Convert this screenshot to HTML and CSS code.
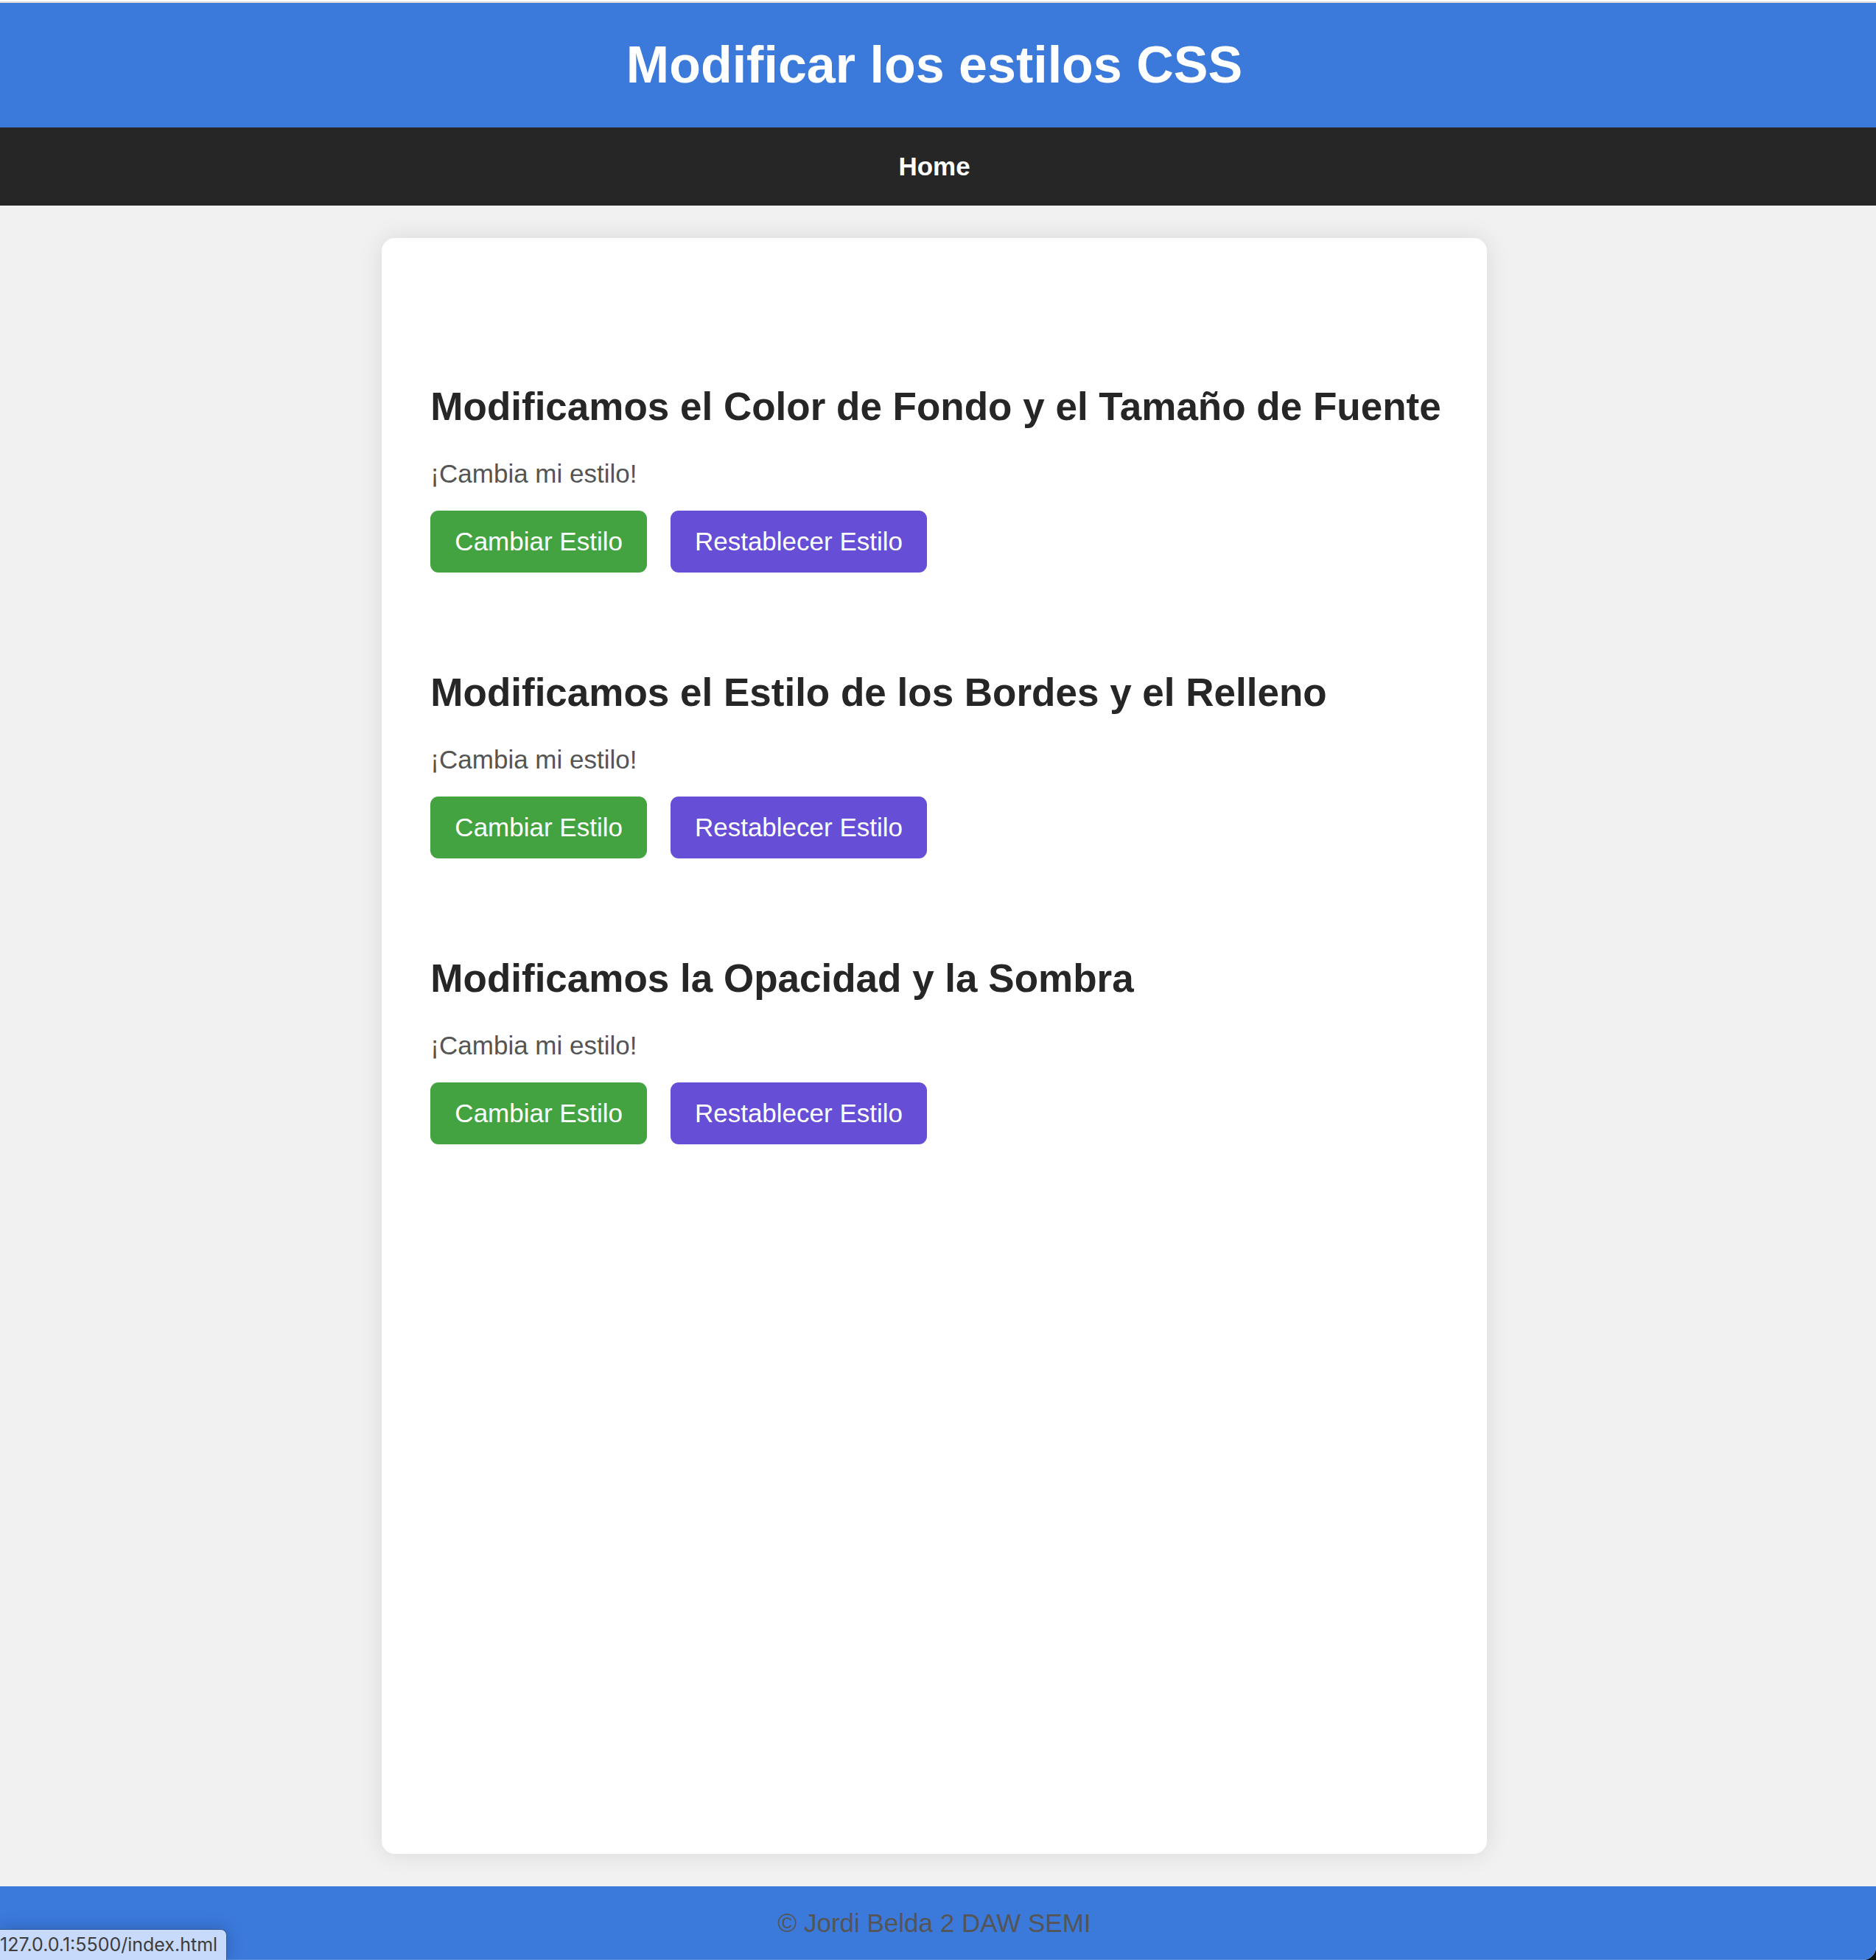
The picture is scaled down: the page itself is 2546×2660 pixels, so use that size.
FILE: index.html
```html
<!DOCTYPE html>
<html lang="es">
<head>
  <meta charset="UTF-8">
  <meta name="viewport" content="width=device-width, initial-scale=1">
  <title>Modificar los estilos CSS</title>
  <link rel="stylesheet" href="styles.css">
</head>
<body>
  <div class="page">
    <header class="header">
      <h1 class="title">Modificar los estilos CSS</h1>
    </header>
    <nav class="nav">
      <a class="nav-link" href="index.html">Home</a>
    </nav>
    <main class="main">
      <div class="card">
        <section class="section">
          <h2 class="heading">Modificamos el Color de Fondo y el Tamaño de Fuente</h2>
          <p class="text">¡Cambia mi estilo!</p>
          <div class="actions">
            <button class="button button-change" type="button">Cambiar Estilo</button>
            <button class="button button-reset" type="button">Restablecer Estilo</button>
          </div>
        </section>
        <section class="section">
          <h2 class="heading">Modificamos el Estilo de los Bordes y el Relleno</h2>
          <p class="text">¡Cambia mi estilo!</p>
          <div class="actions">
            <button class="button button-change" type="button">Cambiar Estilo</button>
            <button class="button button-reset" type="button">Restablecer Estilo</button>
          </div>
        </section>
        <section class="section">
          <h2 class="heading">Modificamos la Opacidad y la Sombra</h2>
          <p class="text">¡Cambia mi estilo!</p>
          <div class="actions">
            <button class="button button-change" type="button">Cambiar Estilo</button>
            <button class="button button-reset" type="button">Restablecer Estilo</button>
          </div>
        </section>
      </div>
    </main>
    <footer class="footer">
      <p class="text">© Jordi Belda 2 DAW SEMI</p>
    </footer>
    <div class="status">127.0.0.1:5500/index.html</div>
  </div>
</body>
</html>
```
FILE: styles.css
```css
* {
  box-sizing: border-box;
}

body {
  margin: 0;
  background: #0a1710;
  font-family: "Liberation Sans", Arial, sans-serif;
  font-size: 35px;
  line-height: 40px;
  color: #555;
}

h1,
h2,
p {
  margin: 0;
}

/* Window area: hairline under the toolbar, rounded lower corner */
.page {
  position: relative;
  display: flex;
  flex-direction: column;
  min-height: 100vh;
  padding-top: 2px;
  overflow: hidden;
  background: #f1f1f1 linear-gradient(#fff, #fff) top / 100% 2px no-repeat;
  border-bottom-right-radius: 18px;
}

.header,
.nav,
.main,
.footer {
  display: flex;
  justify-content: center;
  padding-right: 10px;
}

.header {
  padding-top: 44px;
  padding-bottom: 45px;
  border-top: 2px solid #d9d9d9;
  background: #3b79db;
}

.title {
  font-size: 70px;
  line-height: 80px;
  color: #fff;
}

.nav {
  padding-top: 33px;
  padding-bottom: 33px;
  background: #262626;
}

.nav-link {
  font-weight: bold;
  color: #fff;
  text-decoration: none;
}

.main {
  flex: 1;
  padding-top: 44px;
  padding-bottom: 44px;
}

.card {
  display: flex;
  flex-direction: column;
  gap: 132px;
  padding: 198px 62px 198px 66px;
  border-radius: 18px;
  background: #fff;
  box-shadow: 0 0 33px rgba(0, 0, 0, 0.1);
}

.heading {
  margin-bottom: 41px;
  font-size: 53px;
  line-height: 61px;
  color: #262626;
}

.actions {
  display: flex;
  gap: 32px;
  margin-top: 30px;
}

.button {
  padding: 22px 33px;
  border: 0;
  border-radius: 11px;
  font: inherit;
  color: #fff;
  cursor: pointer;
}

.button-change {
  background: #43a341;
}

.button-reset {
  background: #664ed7;
}

.footer {
  padding-top: 30px;
  padding-bottom: 29px;
  border-bottom: 1px solid #5a8fe2;
  background: #3b79db;
}

/* Link address shown over the lower left corner */
.status {
  position: absolute;
  bottom: 0;
  left: 0;
  padding: 5px 12px 5px 0;
  border-top: 1px solid #2b5aa5;
  border-right: 1px solid #2b5aa5;
  border-top-right-radius: 8px;
  background: #c8dafc;
  box-shadow: 0 0 24px rgba(0, 0, 0, 0.2);
  font-family: Inter, sans-serif;
  font-size: 25px;
  line-height: 31px;
  color: #3c3c3c;
}
```
